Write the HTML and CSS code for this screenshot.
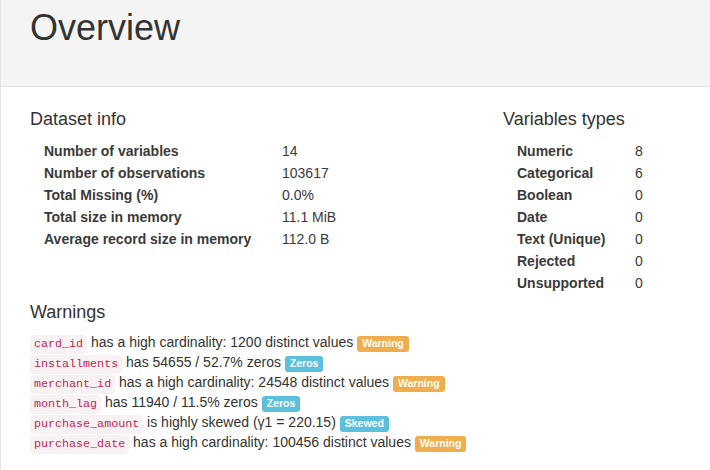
FILE: index.html
```html
<!DOCTYPE html>
<html>
<head>
<meta charset="utf-8">
<link rel="stylesheet" href="styles.css">
</head>
<body>
<div class="page">
  <header class="banner">
    <h1 class="title">Overview</h1>
  </header>
  <main class="overview">
    <section class="col">
      <h4 class="heading">Dataset info</h4>
      <div class="stats stats-wide">
        <div class="lbl">Number of variables</div><div class="val">14</div>
        <div class="lbl">Number of observations</div><div class="val">103617</div>
        <div class="lbl">Total Missing (%)</div><div class="val">0.0%</div>
        <div class="lbl">Total size in memory</div><div class="val">11.1 MiB</div>
        <div class="lbl">Average record size in memory</div><div class="val">112.0 B</div>
      </div>
    </section>
    <section class="col">
      <h4 class="heading">Variables types</h4>
      <div class="stats stats-narrow">
        <div class="lbl">Numeric</div><div class="val">8</div>
        <div class="lbl">Categorical</div><div class="val">6</div>
        <div class="lbl">Boolean</div><div class="val">0</div>
        <div class="lbl">Date</div><div class="val">0</div>
        <div class="lbl">Text (Unique)</div><div class="val">0</div>
        <div class="lbl">Rejected</div><div class="val">0</div>
        <div class="lbl">Unsupported</div><div class="val">0</div>
      </div>
    </section>
    <section class="warnings">
      <h4 class="heading">Warnings</h4>
      <ul class="warn-list">
        <li><code class="var">card_id</code> has a high cardinality: 1200 distinct values <span class="label label-warning">Warning</span></li>
        <li><code class="var">installments</code> has 54655 / 52.7% zeros <span class="label label-info">Zeros</span></li>
        <li><code class="var">merchant_id</code> has a high cardinality: 24548 distinct values <span class="label label-warning">Warning</span></li>
        <li><code class="var">month_lag</code> has 11940 / 11.5% zeros <span class="label label-info">Zeros</span></li>
        <li><code class="var">purchase_amount</code> is highly skewed (γ1 = 220.15) <span class="label label-info">Skewed</span></li>
        <li><code class="var">purchase_date</code> has a high cardinality: 100456 distinct values <span class="label label-warning">Warning</span></li>
      </ul>
    </section>
  </main>
</div>
</body>
</html>
```

FILE: styles.css
```css
html, body {
  margin: 0;
  padding: 0;
  background: #fff;
}
body {
  font-family: "Liberation Sans", Arial, sans-serif;
  font-size: 14px;
  color: #333;
}
.page {
  border-left: 1px solid #e2e2e2;
  min-height: 100vh;
  box-sizing: border-box;
}
.banner {
  background: #f4f4f4;
  border-bottom: 1px solid #e3e3e3;
  height: 87px;
  box-sizing: border-box;
  padding: 8px 29px 0;
}
.title {
  margin: 0;
  font-size: 36px;
  line-height: 40px;
  font-weight: 400;
  color: #333;
}
.overview {
  display: grid;
  grid-template-columns: 473px 1fr;
  padding: 22px 29px 0;
}
.heading {
  margin: 0;
  font-size: 18px;
  line-height: 20px;
  font-weight: 400;
  color: #333;
}
.stats {
  display: grid;
  margin-top: 11px;
  padding-left: 14px;
  line-height: 22px;
}
.stats-wide {
  grid-template-columns: 238px auto;
}
.stats-narrow {
  grid-template-columns: 118px auto;
}
.lbl {
  font-weight: 700;
  color: #3a3a3a;
}
.val {
  color: #3a3a3a;
}
.warnings {
  grid-column: 1 / -1;
  margin-top: 8px;
}
.warn-list {
  list-style: none;
  margin: 10px 0 0;
  padding: 0;
}
.warn-list li {
  line-height: 20px;
  height: 20px;
}
.var {
  font-family: "Liberation Mono", "Courier New", monospace;
  font-size: 11.7px;
  color: #c7254e;
  background: #f9f2f4;
  border-radius: 4px;
  padding: 2px 4px;
  line-height: 15px;
  display: inline-block;
  vertical-align: baseline;
}
.label {
  display: inline-block;
  font-size: 10.5px;
  font-weight: 700;
  line-height: 1;
  color: #fff;
  padding: 2px 5px 3px;
  border-radius: 3px;
  vertical-align: baseline;
  white-space: nowrap;
}
.label-warning {
  background: #f0ad4e;
}
.label-info {
  background: #5bc0de;
}
```
